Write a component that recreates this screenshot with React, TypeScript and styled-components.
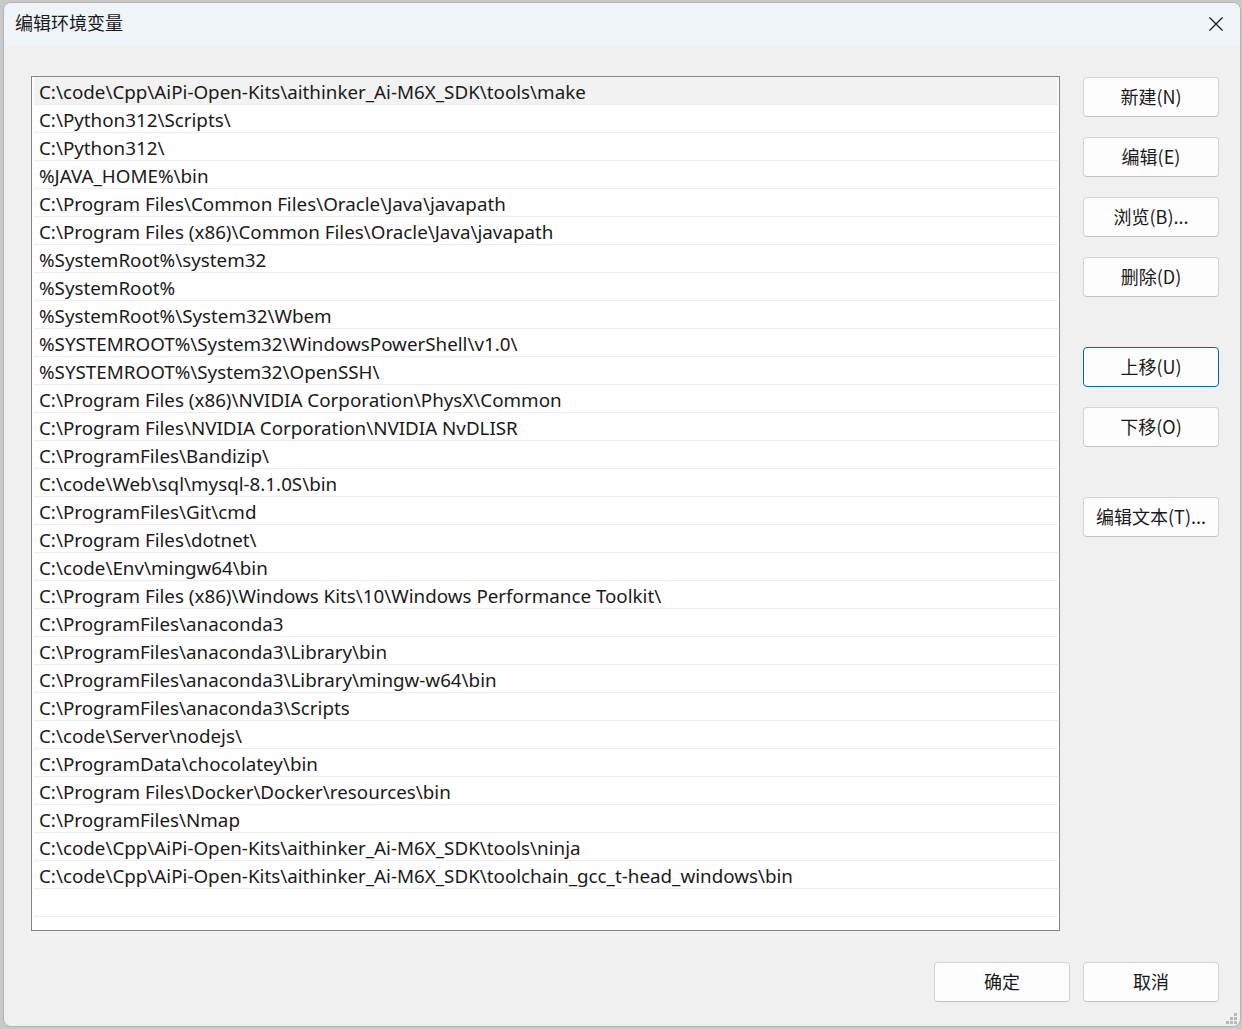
import React from "react";
import styled, { createGlobalStyle } from "styled-components";

const Global = createGlobalStyle`
  html, body { margin: 0; padding: 0; }
  body {
    background: #c9c9c9;
    font-family: "Noto Sans", "Noto Sans CJK SC", sans-serif;
    width: 1242px;
    height: 1029px;
    overflow: hidden;
  }
  * { box-sizing: border-box; }
`;

const Window = styled.div`
  position: relative;
  margin: 2px 1px 0 3px;
  width: 1238px;
  height: 1025px;
  border: 1px solid #b3b3b3;
  border-radius: 8px;
  overflow: hidden;
  background: #f0f0f0;
  display: flex;
  flex-direction: column;
`;

const TitleBar = styled.div`
  height: 43px;
  flex: none;
  background: #eff4f9;
  display: flex;
  align-items: center;
  justify-content: space-between;
  padding: 0 10px 0 11px;
`;

const Title = styled.div`
  font-family: "Noto Sans CJK SC", sans-serif;
  font-size: 18px;
  color: #1a1a1a;
  line-height: 1;
  margin-top: -5px;
`;

const CloseBtn = styled.div`
  width: 46px;
  height: 43px;
  display: flex;
  align-items: center;
  justify-content: center;
  margin: -1px -9px 0 0;
`;

const Body = styled.div`
  flex: 1;
  display: flex;
  flex-direction: column;
  padding: 30px 20px 0 27px;
`;

const MainRow = styled.div`
  display: flex;
  gap: 23px;
  align-items: flex-start;
`;

const List = styled.div`
  width: 1029px;
  height: 855px;
  background: #ffffff;
  border: 1px solid #858585;
  padding: 0 1px 0 2px;
  overflow: hidden;
`;

const Row = styled.div<{ $selected?: boolean }>`
  height: 28px;
  border-bottom: 1px solid #ededed;
  background: ${(p) => (p.$selected ? "#f2f2f2" : "#ffffff")};
  padding: 2px 0 0 5px;
  display: flex;
  align-items: center;
  font-size: 18.8px;
  color: #1a1a1a;
  white-space: nowrap;
  font-family: "Noto Sans", "Noto Sans CJK SC", sans-serif;
`;

const SideColumn = styled.div`
  display: flex;
  flex-direction: column;
  padding-top: 1px;
`;

const Button = styled.button<{ $focused?: boolean; $gap?: number }>`
  width: 136px;
  height: 40px;
  margin-top: ${(p) => p.$gap ?? 0}px;
  background: #fdfdfd;
  border: 1px solid ${(p) => (p.$focused ? "#0067c0" : "#d3d3d3")};
  border-bottom-color: ${(p) => (p.$focused ? "#0067c0" : "#c2c2c2")};
  border-radius: 4px;
  font-family: "Noto Sans CJK SC", sans-serif;
  font-size: 18px;
  color: #1a1a1a;
  padding: 0 0 2px 0;
  display: flex;
  align-items: center;
  justify-content: center;
  line-height: 1;
`;

const Footer = styled.div`
  display: flex;
  justify-content: flex-end;
  gap: 13px;
  margin-top: 31px;
  padding-right: 1px;
`;

const Grip = styled.svg`
  position: absolute;
  right: 2px;
  bottom: 1px;
`;

const paths = [
  "C:\\code\\Cpp\\AiPi-Open-Kits\\aithinker_Ai-M6X_SDK\\tools\\make",
  "C:\\Python312\\Scripts\\",
  "C:\\Python312\\",
  "%JAVA_HOME%\\bin",
  "C:\\Program Files\\Common Files\\Oracle\\Java\\javapath",
  "C:\\Program Files (x86)\\Common Files\\Oracle\\Java\\javapath",
  "%SystemRoot%\\system32",
  "%SystemRoot%",
  "%SystemRoot%\\System32\\Wbem",
  "%SYSTEMROOT%\\System32\\WindowsPowerShell\\v1.0\\",
  "%SYSTEMROOT%\\System32\\OpenSSH\\",
  "C:\\Program Files (x86)\\NVIDIA Corporation\\PhysX\\Common",
  "C:\\Program Files\\NVIDIA Corporation\\NVIDIA NvDLISR",
  "C:\\ProgramFiles\\Bandizip\\",
  "C:\\code\\Web\\sql\\mysql-8.1.0S\\bin",
  "C:\\ProgramFiles\\Git\\cmd",
  "C:\\Program Files\\dotnet\\",
  "C:\\code\\Env\\mingw64\\bin",
  "C:\\Program Files (x86)\\Windows Kits\\10\\Windows Performance Toolkit\\",
  "C:\\ProgramFiles\\anaconda3",
  "C:\\ProgramFiles\\anaconda3\\Library\\bin",
  "C:\\ProgramFiles\\anaconda3\\Library\\mingw-w64\\bin",
  "C:\\ProgramFiles\\anaconda3\\Scripts",
  "C:\\code\\Server\\nodejs\\",
  "C:\\ProgramData\\chocolatey\\bin",
  "C:\\Program Files\\Docker\\Docker\\resources\\bin",
  "C:\\ProgramFiles\\Nmap",
  "C:\\code\\Cpp\\AiPi-Open-Kits\\aithinker_Ai-M6X_SDK\\tools\\ninja",
  "C:\\code\\Cpp\\AiPi-Open-Kits\\aithinker_Ai-M6X_SDK\\toolchain_gcc_t-head_windows\\bin",
  "",
];

const sideButtons: { label: string; gap: number; focused?: boolean }[] = [
  { label: "新建(N)", gap: 0 },
  { label: "编辑(E)", gap: 20 },
  { label: "浏览(B)...", gap: 20 },
  { label: "删除(D)", gap: 20 },
  { label: "上移(U)", gap: 50, focused: true },
  { label: "下移(O)", gap: 20 },
  { label: "编辑文本(T)...", gap: 50 },
];

export default function App() {
  return (
    <>
      <Global />
      <Window>
        <TitleBar>
          <Title>编辑环境变量</Title>
          <CloseBtn>
            <svg width="16" height="16" viewBox="0 0 16 16">
              <path d="M1.5 1.5 L14.5 14.5 M14.5 1.5 L1.5 14.5" stroke="#1a1a1a" strokeWidth="1.3" fill="none" />
            </svg>
          </CloseBtn>
        </TitleBar>
        <Body>
          <MainRow>
            <List>
              {paths.map((p, i) => (
                <Row key={i} $selected={i === 0}>
                  {p}
                </Row>
              ))}
            </List>
            <SideColumn>
              {sideButtons.map((b) => (
                <Button key={b.label} $gap={b.gap} $focused={b.focused}>
                  {b.label}
                </Button>
              ))}
            </SideColumn>
          </MainRow>
          <Footer>
            <Button>确定</Button>
            <Button>取消</Button>
          </Footer>
        </Body>
        <Grip width="12" height="12" viewBox="0 0 12 12">
          <rect x="8" y="0" width="3" height="3" fill="#b8b8b8" />
          <rect x="4" y="4" width="3" height="3" fill="#b8b8b8" />
          <rect x="8" y="4" width="3" height="3" fill="#b8b8b8" />
          <rect x="0" y="8" width="3" height="3" fill="#b8b8b8" />
          <rect x="4" y="8" width="3" height="3" fill="#b8b8b8" />
          <rect x="8" y="8" width="3" height="3" fill="#b8b8b8" />
        </Grip>
      </Window>
    </>
  );
}
